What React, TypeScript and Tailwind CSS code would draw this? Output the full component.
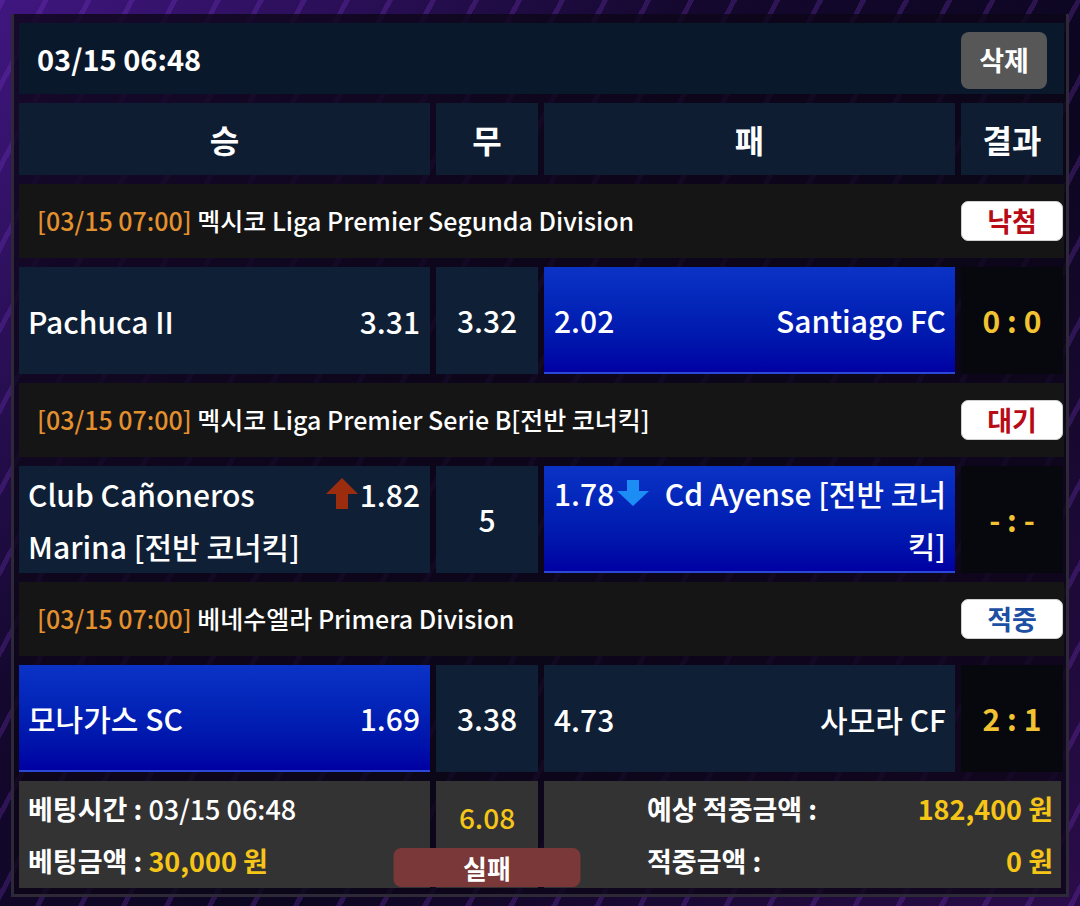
import React from 'react';

type Side = { name: string; odds: string; arrow?: 'up' | 'down'; picked?: boolean };
type Match = {
  time: string;
  league: string;
  status: '낙첨' | '대기' | '적중';
  home: Side;
  draw: string;
  away: Side;
  score: string;
};

const matches: Match[] = [
  {
    time: '[03/15 07:00]',
    league: '멕시코 Liga Premier Segunda Division',
    status: '낙첨',
    home: { name: 'Pachuca II', odds: '3.31' },
    draw: '3.32',
    away: { name: 'Santiago FC', odds: '2.02', picked: true },
    score: '0 : 0',
  },
  {
    time: '[03/15 07:00]',
    league: '멕시코 Liga Premier Serie B[전반 코너킥]',
    status: '대기',
    home: { name: 'Club Cañoneros Marina [전반 코너킥]', odds: '1.82', arrow: 'up' },
    draw: '5',
    away: { name: 'Cd Ayense [전반 코너킥]', odds: '1.78', arrow: 'down', picked: true },
    score: '- : -',
  },
  {
    time: '[03/15 07:00]',
    league: '베네수엘라 Primera Division',
    status: '적중',
    home: { name: '모나가스 SC', odds: '1.69', picked: true },
    draw: '3.38',
    away: { name: '사모라 CF', odds: '4.73' },
    score: '2 : 1',
  },
];

const grid = 'grid grid-cols-[411px_102px_411px_102px] gap-[6px]';
const navy = 'bg-[#0f1f36]';
const picked = 'bg-linear-to-b from-[#0b33c6] to-[#0000a2] border-b-2 border-[#2b48d6]';

function UpArrow() {
  return (
    <svg width="34" height="33" viewBox="0 0 34 33" className="shrink-0">
      <path d="M17 1 L33 17 L23 17 L23 32 L11 32 L11 17 L1 17 Z" fill="#9c2c0e" />
    </svg>
  );
}

function DownArrow() {
  return (
    <svg width="34" height="28" viewBox="0 0 34 28" className="shrink-0">
      <path d="M11 1 L23 1 L23 12 L33 12 L17 27 L1 12 L11 12 Z" fill="#1c8df5" />
    </svg>
  );
}

function StatusBadge({ status }: { status: Match['status'] }) {
  const color = status === '적중' ? 'text-[#1d4fa3]' : 'text-[#b70c16]';
  return (
    <div className={`w-[102px] h-[40px] rounded-[7px] bg-white border border-[#d0d0d0] flex items-center justify-center text-[27px] font-bold ${color}`}>
      {status}
    </div>
  );
}

function HomeCell({ side }: { side: Side }) {
  return (
    <div className={`${side.picked ? picked : navy} flex items-center pl-[9px] pr-[10px]`}>
      <div className="w-full flex justify-between items-start">
        <div className="leading-[52px] font-medium">{side.name}</div>
        <div className="flex items-center gap-[1px] leading-[52px] font-medium">
          {side.arrow === 'up' && <UpArrow />}
          <span>{side.odds}</span>
        </div>
      </div>
    </div>
  );
}

function AwayCell({ side }: { side: Side }) {
  return (
    <div className={`${side.picked ? picked : navy} flex items-center pl-[10px] pr-[9px]`}>
      <div className="w-full flex justify-between items-start">
        <div className="flex items-center gap-[2px] leading-[52px] font-medium shrink-0">
          <span>{side.odds}</span>
          {side.arrow === 'down' && <DownArrow />}
        </div>
        <div className="leading-[52px] font-medium text-right pl-[10px]">{side.name}</div>
      </div>
    </div>
  );
}

function MatchBlock({ m }: { m: Match }) {
  return (
    <>
      <div className="h-[74px] bg-[#151515] flex items-center justify-between pl-[18px] pr-[1px]">
        <div className="text-[25px] font-medium">
          <span className="text-[#e3902f]">{m.time}</span> <span>{m.league}</span>
        </div>
        <StatusBadge status={m.status} />
      </div>
      <div className={`${grid} h-[107px] text-[30px]`}>
        <HomeCell side={m.home} />
        <div className={`${navy} flex items-center justify-center font-medium`}>{m.draw}</div>
        <AwayCell side={m.away} />
        <div className="bg-[#07070e] flex items-center justify-center font-bold text-[#f1c232]">{m.score}</div>
      </div>
    </>
  );
}

export default function App() {
  return (
    <div className="w-[1080px] h-[906px] overflow-hidden pt-[14px] pl-[11px] pr-[11px] text-white font-['Noto_Sans_CJK_KR','Noto_Sans',sans-serif] bg-[#120828] bg-[repeating-linear-gradient(118deg,rgba(130,60,210,0.25)_0px,rgba(130,60,210,0.25)_5px,transparent_5px,transparent_38px),linear-gradient(135deg,#401680_0%,#14082e_35%,#0c0620_60%,#2a0c4a_100%)]">
      <div className="h-[883px] border-l-[3px] border-b-[3px] border-r-[3px] border-[#2e2936] bg-[#0c0618]/80 pt-[9px] pl-[5px] pr-[2px] flex flex-col gap-[9px]">
        <div className="h-[71px] bg-[#0a182b] flex items-center justify-between pl-[18px] pr-[17px]">
          <div className="text-[29px] font-bold">03/15 06:48</div>
          <button className="mt-[3px] w-[86px] h-[57px] rounded-[8px] bg-[#575757] text-[27px] font-bold text-white">삭제</button>
        </div>

        <div className={`${grid} h-[72px] text-[32px] font-bold`}>
          <div className="bg-[#0e1d31] flex items-center justify-center">승</div>
          <div className="bg-[#0e1d31] flex items-center justify-center">무</div>
          <div className="bg-[#0e1d31] flex items-center justify-center">패</div>
          <div className="bg-[#0e1d31] flex items-center justify-center">결과</div>
        </div>

        {matches.map((m, i) => (
          <MatchBlock key={i} m={m} />
        ))}

        <div className="grid grid-cols-[411px_102px_517px] gap-[6px] h-[107px] text-[27px]">
          <div className="bg-[#333333] flex flex-col justify-center pl-[9px]">
            <div className="leading-[52px]">
              <span className="font-bold">베팅시간 : </span>
              <span className="font-medium">03/15 06:48</span>
            </div>
            <div className="leading-[52px]">
              <span className="font-bold">베팅금액 : </span>
              <span className="font-bold text-[#f5c518]">30,000 원</span>
            </div>
          </div>
          <div className="relative bg-[#333333] flex justify-center pt-[14px]">
            <span className="text-[28px] font-medium text-[#f5c518] leading-[44px]">6.08</span>
            <div className="absolute z-10 bottom-[1px] left-1/2 -translate-x-1/2 w-[187px] h-[39px] rounded-[8px] bg-[#7a3838] flex items-center justify-center text-[26px] font-bold">
              실패
            </div>
          </div>
          <div className="bg-[#333333] grid grid-cols-[auto_1fr] content-center pl-[103px] pr-[8px] font-bold">
            <div className="leading-[52px]">예상 적중금액 :</div>
            <div className="leading-[52px] text-right text-[#f5c518]">182,400 원</div>
            <div className="leading-[52px]">적중금액 :</div>
            <div className="leading-[52px] text-right text-[#f5c518]">0 원</div>
          </div>
        </div>
      </div>
    </div>
  );
}
